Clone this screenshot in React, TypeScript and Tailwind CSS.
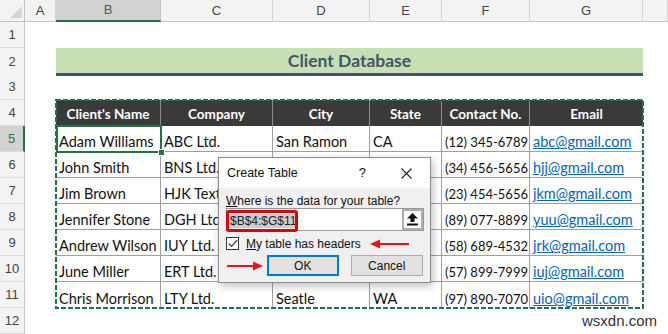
import React from "react";

const ROW = "grid h-[26px] grid-cols-[25px_31px_105px_112px_97px_72px_88px_113px_1fr]";

// City/State of rows 6-10 sit under the dialog, so they stay blank
const clients = [
  ["Adam Williams", "ABC Ltd.", "San Ramon", "CA", "(12) 345-6789", "abc@gmail.com"],
  ["John Smith", "BNS Ltd.", "", "", "(34) 456-5656", "hjj@gmail.com"],
  ["Jim Brown", "HJK Textile", "", "", "(23) 454-5656", "jkm@gmail.com"],
  ["Jennifer Stone", "DGH Ltd.", "", "", "(89) 077-8899", "yuu@gmail.com"],
  ["Andrew Wilson", "IUY Ltd.", "", "", "(58) 689-4532", "jrk@gmail.com"],
  ["June Miller", "ERT Ltd.", "", "", "(57) 899-7999", "iuj@gmail.com"],
  ["Chris Morrison", "LTY Ltd.", "Seatle", "WA", "(97) 890-7070", "uio@gmail.com"],
];

const headers = ["Client's Name", "Company", "City", "State", "Contact No.", "Email"];

function RowHead({ n, active }: { n: number; active?: boolean }) {
  return (
    <div
      className={`flex items-center justify-center border-b border-b-[#dadada] text-[13px] font-['Liberation_Sans',Arial,sans-serif] ${
        active
          ? "bg-[#d2d2d2] border-r-2 border-r-[#217346] text-[#217346]"
          : "bg-[#f3f3f3] border-r border-r-[#c6c6c6] text-[#444]"
      }`}
    >
      {n}
    </div>
  );
}

function ColumnHeaders() {
  const cols = ["A", "B", "C", "D", "E", "F", "G", ""];
  return (
    <div className="grid h-[22px] grid-cols-[25px_31px_105px_112px_97px_72px_88px_113px_1fr] bg-[#f3f3f3] text-[13px] font-['Liberation_Sans',Arial,sans-serif]">
      <div className="relative border-r border-b border-[#c6c6c6]">
        <svg className="absolute left-[9px] top-[6px]" width="13" height="13" viewBox="0 0 13 13">
          <polygon points="13,0 13,12 1,12" fill="#d6d6d6" />
        </svg>
      </div>
      {cols.map((c) =>
        c === "B" ? (
          <div key={c} className="flex items-center justify-center bg-[#d2d2d2] border-r border-r-[#c6c6c6] border-b-2 border-b-[#217346] text-[#217346]">
            {c}
          </div>
        ) : (
          <div key={c || "rest"} className="flex items-center justify-center border-r border-r-[#d6d6d6] border-b border-b-[#c6c6c6] text-[#444]">
            {c}
          </div>
        )
      )}
    </div>
  );
}

function UpArrowIcon() {
  return (
    <svg width="11" height="13" viewBox="0 0 11 13">
      <polygon points="5.5,0 11,5.5 7.5,5.5 7.5,9 3.5,9 3.5,5.5 0,5.5" fill="#111" />
      <rect x="0" y="10.5" width="11" height="2" fill="#111" />
    </svg>
  );
}

function RedArrow({ dir }: { dir: "left" | "right" }) {
  return dir === "left" ? (
    <svg width="40" height="10" viewBox="0 0 40 10">
      <line x1="8" y1="5" x2="39" y2="5" stroke="#e8141c" strokeWidth="2" />
      <polygon points="0,5 10,0.5 10,9.5" fill="#e8141c" />
    </svg>
  ) : (
    <svg width="36" height="10" viewBox="0 0 36 10">
      <line x1="0" y1="5" x2="28" y2="5" stroke="#e8141c" strokeWidth="2" />
      <polygon points="36,5 26,0.5 26,9.5" fill="#e8141c" />
    </svg>
  );
}

function CreateTableDialog() {
  return (
    <div className="absolute left-[218px] top-[157px] flex h-[126px] w-[213px] flex-col border border-[#8c8c8c] bg-[#f0f0f0] font-['Liberation_Sans',Arial,sans-serif] text-[12px] text-[#111] shadow-[2px_3px_8px_rgba(0,0,0,0.25)]">
      <div className="flex h-[30px] items-center bg-white pl-[8px] pr-[18px]">
        <span className="text-[12.5px]">Create Table</span>
        <span className="ml-auto mr-[35px] text-[13px]">?</span>
        <svg width="11" height="11" viewBox="0 0 11 11">
          <path d="M0.5 0.5 L10.5 10.5 M10.5 0.5 L0.5 10.5" stroke="#222" strokeWidth="1.1" />
        </svg>
      </div>
      <div className="flex flex-col px-[7px] pt-[7px]">
        <div className="leading-[13px]">
          <span className="underline">W</span>here is the data for your table?
        </div>
        <div className="flex h-[23px] w-[198px] border border-[#9a9a9a] bg-white">
          <div className="relative flex flex-1 items-center pl-[2px] pt-[2px]">
            <span className="bg-[#cccccc] px-[1px] leading-[14px] text-[#222]">$B$4:$G$11</span>
            <div className="absolute left-[-1px] top-[1px] h-[22px] w-[72px] rounded-[3px] border-[3px] border-[#e00000]" />
          </div>
          <div className="flex w-[21px] items-center justify-center border-2 border-[#adadad] bg-white">
            <UpArrowIcon />
          </div>
        </div>
        <div className="mt-[6px] flex h-[13px] items-center">
          <div className="flex h-[13px] w-[13px] items-center justify-center border border-[#333] bg-white">
            <svg width="10" height="9" viewBox="0 0 10 9">
              <path d="M0.8 4.6 L3.6 7.4 L9.2 1.2" fill="none" stroke="#333" strokeWidth="1.2" />
            </svg>
          </div>
          <span className="ml-[7px]">
            <span className="underline">M</span>y table has headers
          </span>
          <span className="ml-[9px] flex">
            <RedArrow dir="left" />
          </span>
        </div>
        <div className="mt-[5px] flex h-[21px] items-center">
          <span className="ml-[1px] flex">
            <RedArrow dir="right" />
          </span>
          <div className="ml-[4px] flex h-[21px] w-[72px] items-center justify-center border-2 border-[#0078d7] bg-[#e1e1e1]">
            OK
          </div>
          <div className="ml-[12px] flex h-[21px] w-[73px] items-center justify-center border border-[#adadad] bg-[#e1e1e1]">
            Cancel
          </div>
        </div>
      </div>
    </div>
  );
}

export default function App() {
  return (
    <div className="relative h-[334px] w-[668px] overflow-hidden bg-white font-['Lato',sans-serif] text-[#111]">
      <ColumnHeaders />

      {/* row 1 */}
      <div className={ROW}>
        <RowHead n={1} />
      </div>

      {/* row 2: title band */}
      <div className={ROW}>
        <RowHead n={2} />
        <div />
        <div className="col-span-6 flex h-[28px] items-center justify-center border-b-[3px] border-b-[#44546a] bg-[#c6e0b4] pt-[1px] text-[17.5px] font-bold text-[#44546a]">
          Client Database
        </div>
      </div>

      {/* row 3 */}
      <div className={ROW}>
        <RowHead n={3} />
      </div>

      {/* row 4: table header */}
      <div className={ROW}>
        <RowHead n={4} />
        <div />
        {headers.map((h, i) => (
          <div
            key={h}
            className={`flex items-center justify-center bg-[#3a3a3a] pt-[3px] text-[13.5px] font-bold text-white ${
              i < 5 ? "border-r border-r-[#8a8a8a]" : ""
            }`}
          >
            {h}
          </div>
        ))}
      </div>

      {clients.map((row, r) => (
        <div key={row[0]} className={ROW}>
          <RowHead n={r + 5} active={r === 0} />
          <div />
          {row.map((v, c) => (
            <div
              key={c}
              className={`flex items-end whitespace-nowrap pb-[1px] pl-[3px] leading-[16px] ${
                c < 5 ? "border-r border-r-[#a0a0a0]" : ""
              } ${r < 6 ? "border-b border-b-[#a0a0a0]" : ""} ${
                c === 4 ? "text-[13px]" : "text-[14.5px]"
              } ${c === 5 ? "text-[#0563c1] underline" : ""}`}
            >
              {v}
            </div>
          ))}
        </div>
      ))}

      {/* row 12 */}
      <div className={ROW}>
        <RowHead n={12} />
        <div className="col-span-8 flex items-center justify-end pr-[11px] text-[15px] text-[#333] font-['Liberation_Sans',Arial,sans-serif]">
          wsxdn.com
        </div>
      </div>

      {/* copy marquee around B4:G11 */}
      <svg className="pointer-events-none absolute left-[55px] top-[99px]" width="590" height="211" viewBox="0 0 590 211">
        <rect x="1" y="1" width="587" height="208" fill="none" stroke="#217346" strokeWidth="2" strokeDasharray="5 2" />
      </svg>

      {/* active cell B5 */}
      <div className="pointer-events-none absolute left-[56px] top-[125px] h-[28px] w-[106px] border-2 border-[#217346]" />
      <div className="pointer-events-none absolute left-[158px] top-[149px] h-[7px] w-[7px] border border-white bg-[#217346]" />

      <CreateTableDialog />
    </div>
  );
}
